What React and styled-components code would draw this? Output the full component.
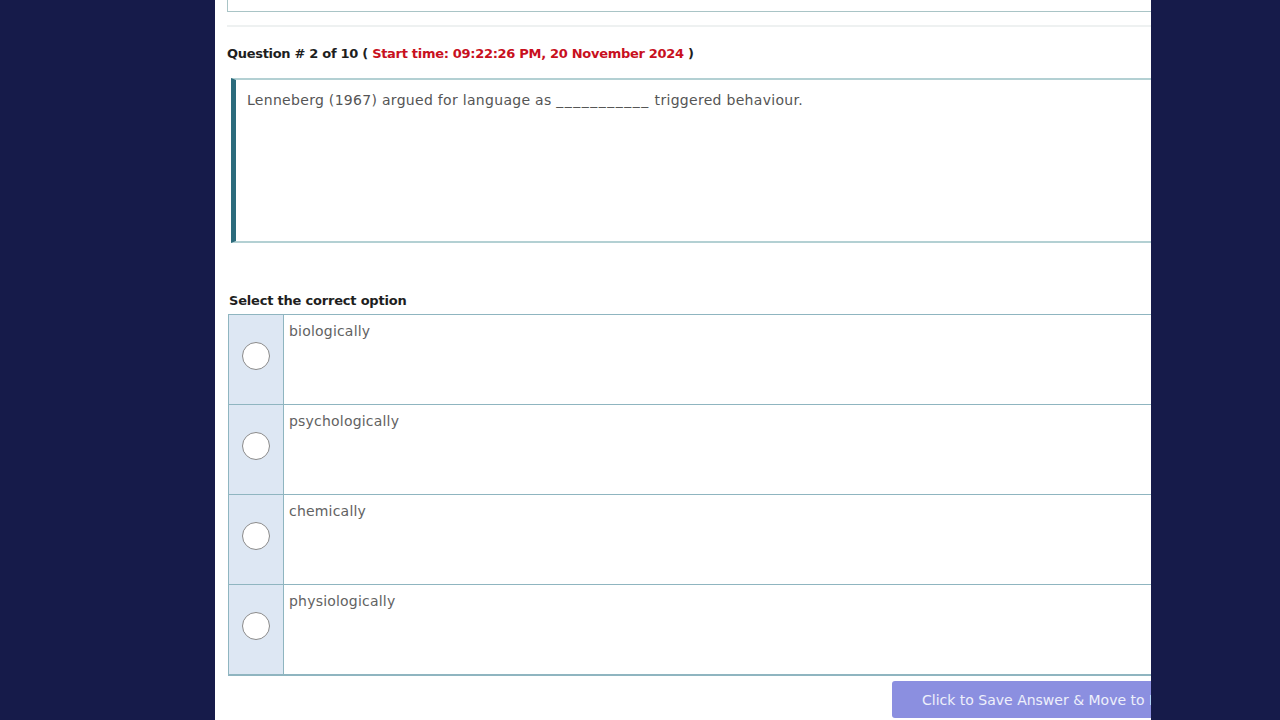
import styled, { createGlobalStyle } from 'styled-components';

const GlobalStyle = createGlobalStyle`
  html, body {
    margin: 0;
    padding: 0;
    background: #161b4a;
    height: 100%;
    overflow: hidden;
  }
  body {
    font-family: "DejaVu Sans", "Noto Sans", sans-serif;
  }
`;

const options = ['biologically', 'psychologically', 'chemically', 'physiologically'];

function App() {
  return (
    <>
      <GlobalStyle />
      <Screen>
        <Panel>
          <Content>
            <PrevBox>
              <PrevText>Language Acquisition (LING)</PrevText>
            </PrevBox>
            <Divider />
            <Heading>
              Question # 2 of 10 ( <Red>Start time: 09:22:26 PM, 20 November 2024</Red> )
            </Heading>
            <QuestionBox>
              Lenneberg (1967) argued for language as <Blank>___________</Blank> triggered behaviour.
            </QuestionBox>
            <Label>Select the correct option</Label>
            <Options>
              {options.map((o) => (
                <Row key={o}>
                  <RadioCell>
                    <Radio />
                  </RadioCell>
                  <OptionText>{o}</OptionText>
                </Row>
              ))}
            </Options>
            <Footer>
              <SaveButton>Click to Save Answer &amp; Move to Next Question</SaveButton>
            </Footer>
          </Content>
        </Panel>
      </Screen>
    </>
  );
}

const Screen = styled.div`
  height: 720px;
  padding-left: 215px;
`;

const Panel = styled.div`
  width: 936px;
  height: 720px;
  background: #ffffff;
  overflow: hidden;
  padding-left: 12px;
  box-sizing: border-box;
`;

const Content = styled.div`
  width: 1040px;
`;

const PrevBox = styled.div`
  height: 40px;
  margin-top: -28px;
  border: 1.5px solid #a9c4c6;
  border-top: none;
  box-sizing: border-box;
  display: flex;
  align-items: flex-end;
  padding: 0 0 14px 130px;
`;

const PrevText = styled.div`
  font-size: 14px;
  font-weight: 700;
  color: #222;
`;

const Divider = styled.div`
  height: 2px;
  background: #eef1f1;
  margin-top: 13px;
`;

const Heading = styled.div`
  margin-top: 18px;
  font-size: 13px;
  font-weight: 700;
  color: #1e1e1e;
  letter-spacing: -0.3px;
  line-height: 18px;
`;

const Red = styled.span`
  color: #c8101e;
`;

const QuestionBox = styled.div`
  margin: 15px 0 0 4px;
  height: 165px;
  box-sizing: border-box;
  border: 2px solid #b3d0d3;
  border-left: 5px solid #2c6b7c;
  padding: 11px 11px;
  font-size: 14px;
  letter-spacing: 0.3px;
  color: #555;
  line-height: 18px;
`;

const Blank = styled.span`
  letter-spacing: 1.5px;
`;

const Label = styled.div`
  margin: 49px 0 0 2px;
  font-size: 13px;
  font-weight: 700;
  color: #1e1e1e;
  line-height: 18px;
  letter-spacing: -0.2px;
`;

const Options = styled.div`
  margin: 4px 0 0 1px;
  border: 1.5px solid #8fb5c0;
  border-bottom-width: 2px;
`;

const Row = styled.div`
  display: flex;
  height: 90px;
  box-sizing: border-box;
  border-top: 1.5px solid #8fb5c0;
  &:first-child {
    border-top: none;
    height: 89px;
  }
`;

const RadioCell = styled.div`
  width: 55px;
  flex: none;
  background: #dde7f3;
  border-right: 1.5px solid #8fb5c0;
  display: flex;
  align-items: flex-start;
  justify-content: center;
  padding: 27px 1px 0 0;
  box-sizing: border-box;
`;

const Radio = styled.span`
  width: 26px;
  height: 26px;
  border-radius: 50%;
  border: 1.5px solid #8a8a8a;
  background: #fff;
`;

const OptionText = styled.div`
  padding: 7px 5px;
  font-size: 14px;
  letter-spacing: 0.2px;
  color: #626262;
  line-height: 18px;
`;

const Footer = styled.div`
  display: flex;
  padding-left: 665px;
  margin-top: 5px;
`;

const SaveButton = styled.div`
  height: 37px;
  padding: 0 30px;
  background: #8b8fe0;
  color: #eef0fb;
  font-size: 14px;
  border-radius: 3px;
  display: flex;
  align-items: center;
  white-space: nowrap;
`;

export default App;
